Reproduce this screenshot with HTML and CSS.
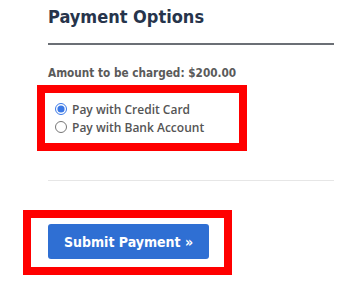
FILE: index.html
```html
<!DOCTYPE html>
<html>
<head>
<meta charset="utf-8">
<link rel="stylesheet" href="styles.css">
</head>
<body>
<div class="panel">
  <h2 class="title">Payment Options</h2>
  <div class="rule"></div>
  <p class="amount">Amount to be charged: $200.00</p>
  <div class="mark mark-options">
    <label class="option"><input type="radio" name="pay" checked><span>Pay with Credit Card</span></label>
    <label class="option"><input type="radio" name="pay"><span>Pay with Bank Account</span></label>
  </div>
  <div class="rule-light"></div>
  <div class="mark mark-submit">
    <button class="submit" type="button">Submit Payment &raquo;</button>
  </div>
</div>
</body>
</html>
```

FILE: styles.css
```css
html, body {
  margin: 0;
  padding: 0;
  background: #ffffff;
}

.panel {
  padding: 0 5px 0 48px;
  font-family: "DejaVu Sans Condensed", "DejaVu Sans", sans-serif;
}

.title {
  margin: 0;
  padding-top: 6px;
  font-size: 18px;
  line-height: 22px;
  font-weight: bold;
  color: #26344b;
}

.rule {
  margin-top: 15px;
  height: 2px;
  background: #6b6f75;
}

.amount {
  margin: 21px 0 0 0;
  font-size: 11.7px;
  line-height: 14px;
  font-weight: bold;
  color: #5a5a5a;
}

.mark {
  border: 8px solid #ff0000;
  box-sizing: border-box;
}

.mark-options {
  margin: 5px 0 0 -11px;
  width: 210px;
  height: 66px;
  padding: 7px 0 0 10px;
  display: flex;
  flex-direction: column;
}

.option {
  display: flex;
  align-items: center;
  gap: 5px;
  height: 18px;
  font-family: "Open Sans", sans-serif;
  font-size: 12px;
  font-weight: 600;
  color: #555555;
}

.option input {
  margin: 0;
  width: 12px;
  height: 12px;
  accent-color: #3a78e6;
}

.rule-light {
  margin-top: 29px;
  height: 1px;
  background: #e6e6e6;
}

.mark-submit {
  margin: 29px 0 0 -25px;
  width: 209px;
  height: 65px;
  padding: 6px 0 0 17px;
}

.submit {
  display: block;
  width: 161px;
  height: 35px;
  border: none;
  border-radius: 3px;
  background: #2f6fd3;
  color: #ffffff;
  font-family: "DejaVu Sans Condensed", "DejaVu Sans", sans-serif;
  font-size: 14px;
  font-weight: bold;
  padding: 0;
  cursor: pointer;
}
```
